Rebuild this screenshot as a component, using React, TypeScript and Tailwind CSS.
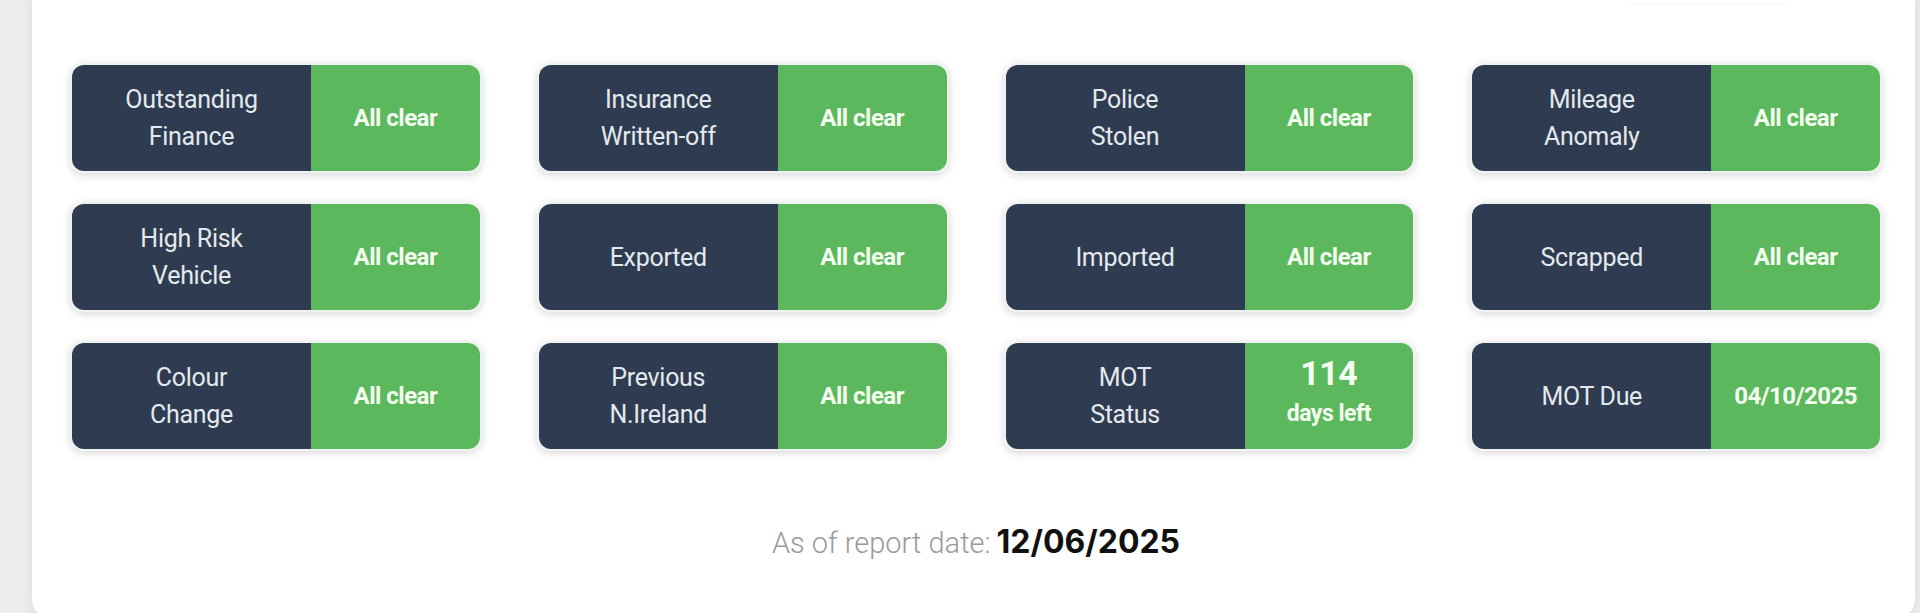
import React from "react";

type Check = {
  label: string[];
  value: React.ReactNode;
};

const checks: Check[] = [
  { label: ["Outstanding", "Finance"], value: "All clear" },
  { label: ["Insurance", "Written-off"], value: "All clear" },
  { label: ["Police", "Stolen"], value: "All clear" },
  { label: ["Mileage", "Anomaly"], value: "All clear" },
  { label: ["High Risk", "Vehicle"], value: "All clear" },
  { label: ["Exported"], value: "All clear" },
  { label: ["Imported"], value: "All clear" },
  { label: ["Scrapped"], value: "All clear" },
  { label: ["Colour", "Change"], value: "All clear" },
  { label: ["Previous", "N.Ireland"], value: "All clear" },
  {
    label: ["MOT", "Status"],
    value: (
      <div className="flex flex-col items-center">
        <span className="text-[34px] leading-[36px]">114</span>
        <span className="text-[23px] leading-[46px]">days left</span>
      </div>
    ),
  },
  { label: ["MOT Due"], value: "04/10/2025" },
];

const CheckCard = ({ label, value }: Check) => {
  return (
    <div className="flex h-[110px] overflow-hidden rounded-[14px] border-2 border-[#eef2f0] shadow-[0_2px_9px_rgba(0,0,0,0.16)]">
      <div className="flex w-[239px] shrink-0 flex-col items-center justify-center bg-[#2e3b50] text-center text-[25px] leading-[37px] tracking-[-0.3px] text-[#e4e9ee]">
        {label.map((line) => (
          <span key={line}>{line}</span>
        ))}
      </div>
      <div className="flex flex-1 items-center justify-center bg-[#5cb85c] text-center text-[24px] font-bold tracking-[-0.5px] text-[#f4fff0]">
        {value}
      </div>
    </div>
  );
};

export default function App() {
  return (
    <div
      className="min-h-[613px] bg-[#ececec] pb-[5px] pl-[32px] pr-[5px]"
      style={{ fontFamily: "Roboto, 'Noto Sans', sans-serif" }}
    >
      <div className="rounded-b-[20px] bg-white pb-[53px] pl-[38px] pr-[33px] pt-[63px] shadow-[0_0_12px_rgba(0,0,0,0.08)]">
        {/* bottom edge of the toolbar button above the grid */}
        <div className="-mt-[104px] mb-[60px] flex justify-end pr-[94px]">
          <div className="h-[44px] w-[160px] rounded-lg bg-white shadow-[0_1px_4px_rgba(0,0,0,0.05)]" />
        </div>

        <div className="grid grid-cols-4 gap-x-[55px] gap-y-[29px]">
          {checks.map((c) => (
            <CheckCard key={c.label.join(" ")} {...c} />
          ))}
        </div>

        <p className="mt-[67px] flex items-baseline justify-center gap-[6px]">
          <span className="text-[29px] font-light text-[#9a9a9a]">As of report date:</span>
          <span
            className="text-[32px] font-bold text-[#111]"
            style={{ fontFamily: "Inter, 'Noto Sans', sans-serif" }}
          >
            12/06/2025
          </span>
        </p>
      </div>
    </div>
  );
}
